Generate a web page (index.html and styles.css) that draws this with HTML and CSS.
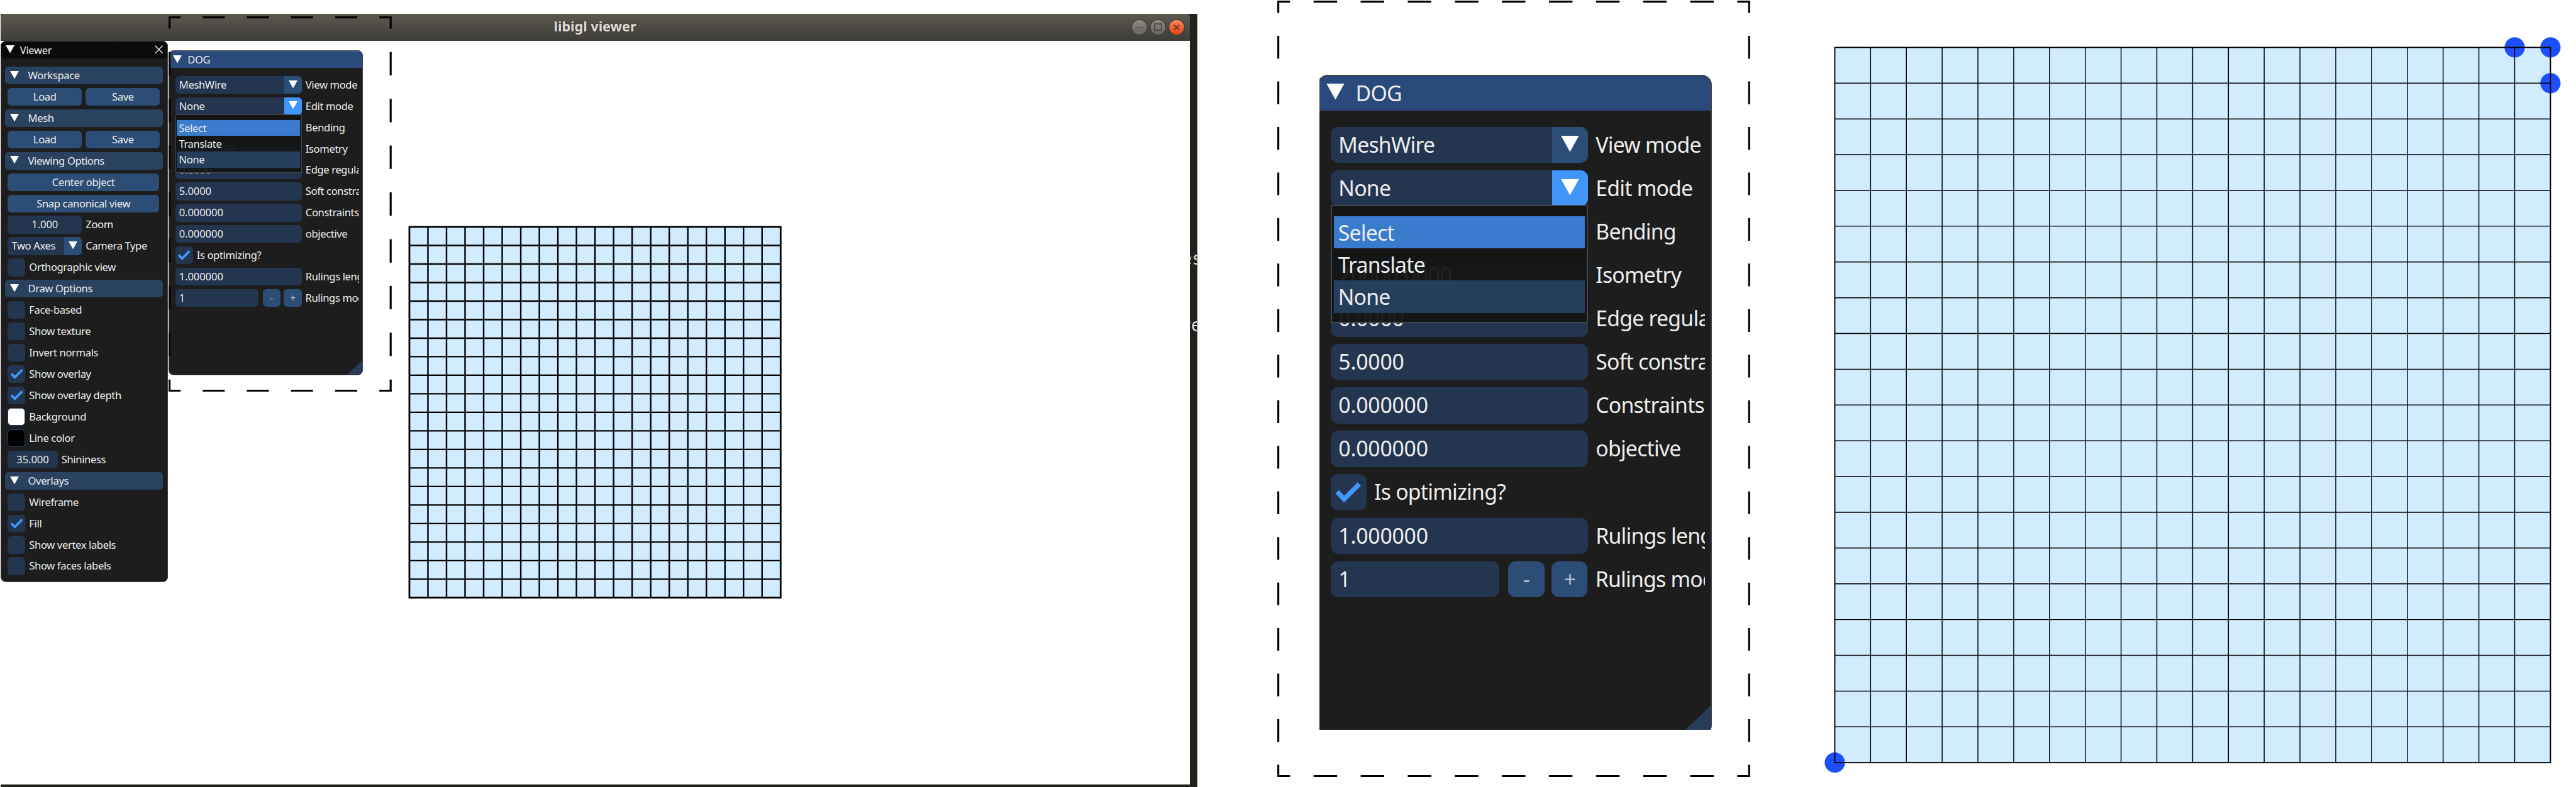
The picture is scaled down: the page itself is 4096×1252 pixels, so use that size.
FILE: index.html
```html
<!DOCTYPE html>
<html lang="en">
<head>
<meta charset="utf-8">
<title>libigl viewer</title>
<link rel="stylesheet" href="styles.css">
</head>
<body>
<svg class="defs" aria-hidden="true">
  <symbol id="down" viewBox="0 0 20 18"><path d="M0 0H20L10 18Z" fill="#fff"/></symbol>
  <symbol id="check" viewBox="0 0 27 22"><path d="M1.5 10.5L9 18.5L25.5 2" fill="none" stroke="#4296fa" stroke-width="5.2"/></symbol>
  <symbol id="mesh" viewBox="0 0 20 20" overflow="visible">
    <rect width="20" height="20" fill="#d1ebff"/>
  </symbol>
  <symbol id="wires" viewBox="0 0 20 20" overflow="visible">
    <path d="M0 1H20M0 2H20M0 3H20M0 4H20M0 5H20M0 6H20M0 7H20M0 8H20M0 9H20M0 10H20M0 11H20M0 12H20M0 13H20M0 14H20M0 15H20M0 16H20M0 17H20M0 18H20M0 19H20M1 0V20M2 0V20M3 0V20M4 0V20M5 0V20M6 0V20M7 0V20M8 0V20M9 0V20M10 0V20M11 0V20M12 0V20M13 0V20M14 0V20M15 0V20M16 0V20M17 0V20M18 0V20M19 0V20" fill="none"/>
  </symbol>
</svg>

<main class="figure">
  <section class="screen">
    <header class="titlebar">
      <span class="caption">libigl viewer</span>
      <svg class="controls" viewBox="0 0 124 40">
        <defs>
          <linearGradient id="gray" x2="0" y2="1"><stop stop-color="#8d8b84"/><stop offset="1" stop-color="#64635c"/></linearGradient>
          <linearGradient id="orange" x2="0" y2="1"><stop stop-color="#f58a68"/><stop offset=".5" stop-color="#ee6239"/><stop offset="1" stop-color="#df4a16"/></linearGradient>
        </defs>
        <g stroke="#3c3b37" stroke-width="2">
          <circle cx="20.3" cy="20" r="17.3" fill="url(#gray)"/>
          <circle cx="61.5" cy="20" r="17.3" fill="url(#gray)"/>
          <circle cx="102.5" cy="20" r="17.3" fill="url(#orange)"/>
        </g>
        <path d="M12 21.3H29M54 12.5H69V26.5H54Z" fill="none" stroke="#3c3b37" stroke-width="2"/>
        <path d="M96.5 14.5L108.5 26M108.5 14.5L96.5 26" fill="none" stroke="#4a2c12" stroke-width="2.2"/>
      </svg>
    </header>
    <div class="viewport">
      <svg class="mesh small" viewBox="-0.1 -0.1 20.2 20.2" preserveAspectRatio="none">
        <use href="#mesh" width="20" height="20"/>
        <use href="#wires" width="20" height="20" stroke="#000" stroke-width=".082"/>
        <rect width="20" height="20" fill="none" stroke="#000" stroke-width=".095"/>
      </svg>
    </div>
    <aside class="terminal"><span class="frag f1">es</span><span class="frag f2">re</span></aside>

    <section class="window viewer">
      <div class="bar dark"><svg class="tri"><use href="#down"/></svg><span>Viewer</span>
        <svg class="close" viewBox="0 0 19 19"><path d="M1 1L18 18M18 1L1 18" stroke="#fff" stroke-width="1.8"/></svg></div>
      <div class="rows">
        <div class="head"><svg class="tri"><use href="#down"/></svg>Workspace</div>
        <div class="row"><div class="btn half">Load</div><div class="btn half">Save</div></div>
        <div class="head"><svg class="tri"><use href="#down"/></svg>Mesh</div>
        <div class="row"><div class="btn half">Load</div><div class="btn half">Save</div></div>
        <div class="head"><svg class="tri"><use href="#down"/></svg>Viewing Options</div>
        <div class="row"><div class="btn full">Center object</div></div>
        <div class="row"><div class="btn full">Snap canonical view</div></div>
        <div class="row"><div class="field half num mid">1.000</div><span>Zoom</span></div>
        <div class="row"><div class="field half combo"><span>Two Axes</span><i class="arrow"><svg class="tri"><use href="#down"/></svg></i></div><span>Camera Type</span></div>
        <div class="row"><i class="box"></i><span>Orthographic view</span></div>
        <div class="head"><svg class="tri"><use href="#down"/></svg>Draw Options</div>
        <div class="row"><i class="box"></i><span>Face-based</span></div>
        <div class="row"><i class="box"></i><span>Show texture</span></div>
        <div class="row"><i class="box"></i><span>Invert normals</span></div>
        <div class="row"><i class="box"><svg class="tick"><use href="#check"/></svg></i><span>Show overlay</span></div>
        <div class="row"><i class="box"><svg class="tick"><use href="#check"/></svg></i><span>Show overlay depth</span></div>
        <div class="row"><i class="box white"></i><span>Background</span></div>
        <div class="row"><i class="box black"></i><span>Line color</span></div>
        <div class="row"><div class="field third num mid">35.000</div><span>Shininess</span></div>
        <div class="head"><svg class="tri"><use href="#down"/></svg>Overlays</div>
        <div class="row"><i class="box"></i><span>Wireframe</span></div>
        <div class="row"><i class="box"><svg class="tick"><use href="#check"/></svg></i><span>Fill</span></div>
        <div class="row"><i class="box"></i><span>Show vertex labels</span></div>
        <div class="row"><i class="box"></i><span>Show faces labels</span></div>
      </div>
    </section>

    <section class="window dog">
      <div class="bar blue"><svg class="tri"><use href="#down"/></svg><span>DOG</span></div>
      <div class="rows">
        <div class="row"><div class="field wide combo"><span>MeshWire</span><i class="arrow"><svg class="tri"><use href="#down"/></svg></i></div><span>View mode</span></div>
        <div class="row"><div class="field wide combo"><span>None</span><i class="arrow on"><svg class="tri"><use href="#down"/></svg></i></div><span>Edit mode</span></div>
        <div class="row"><div class="field wide num"></div><span>Bending</span></div>
        <div class="row"><div class="field wide num">20000.0000</div><span>Isometry</span></div>
        <div class="row"><div class="field wide num">0.0000</div><span>Edge regularization</span></div>
        <div class="row"><div class="field wide num">5.0000</div><span>Soft constraints</span></div>
        <div class="row"><div class="field wide num">0.000000</div><span>Constraints</span></div>
        <div class="row"><div class="field wide num">0.000000</div><span>objective</span></div>
        <div class="row"><i class="box"><svg class="tick"><use href="#check"/></svg></i><span>Is optimizing?</span></div>
        <div class="row"><div class="field wide num">1.000000</div><span>Rulings length</span></div>
        <div class="row"><div class="field step num">1</div><div class="btn sq">-</div><div class="btn sq">+</div><span>Rulings mod</span></div>
      </div>
      <div class="popup"><div class="opt sel">Select</div><div class="opt">Translate</div><div class="opt cur">None</div></div>
      <i class="grip"></i>
    </section>

    <svg class="dash near" viewBox="0 0 492 828.2">
      <path d="M0 2.2H492M0 826H492" stroke-width="4.4" stroke-dasharray="48.7" stroke-dashoffset="22.2"/>
      <path d="M2.2 0V828.2M489.8 0V828.2" stroke-width="4.4" stroke-dasharray="51.6" stroke-dashoffset="24.5"/>
    </svg>
  </section>

  <section class="closeup">
    <svg class="dash far" viewBox="0 0 1042.5 1713">
      <path d="M0 2.2H1042.5M0 1710.8H1042.5" stroke-width="4.4" stroke-dasharray="51.9" stroke-dashoffset="23.8"/>
      <path d="M2.2 0V1713M1040.3 0V1713" stroke-width="4.4" stroke-dasharray="50.25" stroke-dashoffset="22.9"/>
    </svg>
    <div class="crop">
      <section class="window dog">
        <div class="bar blue"><svg class="tri"><use href="#down"/></svg><span>DOG</span></div>
        <div class="rows">
          <div class="row"><div class="field wide combo"><span>MeshWire</span><i class="arrow"><svg class="tri"><use href="#down"/></svg></i></div><span>View mode</span></div>
          <div class="row"><div class="field wide combo"><span>None</span><i class="arrow on"><svg class="tri"><use href="#down"/></svg></i></div><span>Edit mode</span></div>
          <div class="row"><div class="field wide num"></div><span>Bending</span></div>
          <div class="row"><div class="field wide num">20000.0000</div><span>Isometry</span></div>
          <div class="row"><div class="field wide num">0.0000</div><span>Edge regularization</span></div>
          <div class="row"><div class="field wide num">5.0000</div><span>Soft constraints</span></div>
          <div class="row"><div class="field wide num">0.000000</div><span>Constraints</span></div>
          <div class="row"><div class="field wide num">0.000000</div><span>objective</span></div>
          <div class="row"><i class="box"><svg class="tick"><use href="#check"/></svg></i><span>Is optimizing?</span></div>
          <div class="row"><div class="field wide num">1.000000</div><span>Rulings length</span></div>
          <div class="row"><div class="field step num">1</div><div class="btn sq">-</div><div class="btn sq">+</div><span>Rulings mod</span></div>
        </div>
        <div class="popup"><div class="opt sel">Select</div><div class="opt">Translate</div><div class="opt cur">None</div></div>
        <i class="grip"></i>
      </section>
    </div>
  </section>

  <svg class="mesh big" viewBox="-0.5 -0.5 21 21" preserveAspectRatio="none">
    <use href="#mesh" width="20" height="20"/>
    <g fill="#1c50ff"><circle cx="19" cy="0" r=".283"/><circle cx="20" cy="0" r=".283"/><circle cx="20" cy="1" r=".283"/><circle cx="0" cy="20" r=".283"/></g>
    <use href="#wires" width="20" height="20" stroke="#000" stroke-width=".026"/>
    <rect width="20" height="20" fill="none" stroke="#000" stroke-width=".034"/>
  </svg>
</main>
</body>
</html>
```
FILE: styles.css
```css
:root { --u: .72113px; }
* { box-sizing: border-box; }
body { margin: 0; background: #fff; overflow: hidden; font-family: "Noto Sans", "Open Sans", sans-serif; }
i { font-style: normal; display: block; }
svg { display: block; flex: none; }
.defs { position: absolute; width: 0; height: 0; }

.figure { display: flex; align-items: flex-start; width: 4096px; height: 1252px; overflow: hidden; }

/* desktop screenshot: title bar, viewport, terminal strip behind */
.screen {
  position: relative; flex: none; display: grid;
  grid-template: calc(var(--u)*58.6) 1fr / 1fr calc(var(--u)*17);
  width: calc(var(--u)*2639); height: calc(var(--u)*1705);
  margin: calc(var(--u)*31.2) 0 0 calc(var(--u)*1);
  background: #22221d;
}
.titlebar {
  display: flex; align-items: center; justify-content: center; position: relative;
  background: linear-gradient(#5c594f, #3d3c38);
  border-radius: calc(var(--u)*7) calc(var(--u)*7) 0 0;
}
.caption {
  color: #dfdbd2; font-weight: 700; font-size: calc(var(--u)*30); line-height: 1;
  text-shadow: 0 0 calc(var(--u)*3) #2b2a33; margin-bottom: calc(var(--u)*4);
}
.controls { position: absolute; right: calc(var(--u)*7); width: calc(var(--u)*124); height: calc(var(--u)*40); }
.viewport { grid-row: 2; background: #fff; margin-bottom: calc(var(--u)*6); padding: calc(var(--u)*406.9) 0 0 calc(var(--u)*897.9); }
.mesh.small { width: calc(var(--u)*826.8); height: calc(var(--u)*826.2); }
.terminal { grid-column: 2; grid-row: 1 / 3; position: relative; overflow: hidden; border-right: calc(var(--u)*1) solid #55564f; }
.frag { position: absolute; right: calc(var(--u)*-13); font: calc(var(--u)*39)/1 "DejaVu Sans Mono", monospace; color: #dcdcd6; }
.f1 { top: calc(var(--u)*520.5); }
.f2 { top: calc(var(--u)*667.5); right: calc(var(--u)*-11); }

/* tool windows */
.window {
  position: absolute; background: #1d1d1d; color: #ededed; overflow: hidden;
  border: calc(var(--u)*2) solid #44434e; border-radius: calc(var(--u)*11);
  font-size: calc(var(--u)*23); letter-spacing: -.022em; white-space: nowrap;
}
.viewer { left: calc(var(--u)*.7); top: calc(var(--u)*58.5); width: calc(var(--u)*368.5); height: calc(var(--u)*1194.3); }
.dog { left: calc(var(--u)*371); top: calc(var(--u)*79.9); width: calc(var(--u)*427.7); height: calc(var(--u)*716.6); }
.bar { display: flex; align-items: center; height: calc(var(--u)*37.4); padding: 0 calc(var(--u)*9); }
.bar span { margin-left: calc(var(--u)*12.5); }
.dark { background: #0a0a0a; }
.blue { background: #294a7a; border-top: calc(var(--u)*.8) solid #44598a; margin-top: calc(var(--u)*-.8); }
.dog .bar { padding-left: calc(var(--u)*8); height: calc(var(--u)*38.4); }
.tri { width: calc(var(--u)*19.6); height: calc(var(--u)*17.4); position: relative; top: calc(var(--u)*-1.4); }
.close { margin-left: auto; margin-top: calc(var(--u)*-1); width: calc(var(--u)*18.5); height: calc(var(--u)*18.5); }
.rows { display: flex; flex-direction: column; gap: calc(var(--u)*7.99); }
.viewer .rows { padding: calc(var(--u)*18.4) calc(var(--u)*9.6) 0 calc(var(--u)*7.6); }
.dog .rows { padding-top: calc(var(--u)*17.3); margin: 0 calc(var(--u)*6) 0 calc(var(--u)*12.9); overflow: hidden; }
.row, .head { display: flex; align-items: center; height: calc(var(--u)*39.1); flex: none; line-height: calc(var(--u)*39.1); }
.row { gap: calc(var(--u)*8.4); }
.viewer .row { padding-left: calc(var(--u)*6.3); }
.head { background: #294260; border-radius: calc(var(--u)*8); padding-left: calc(var(--u)*12); gap: calc(var(--u)*19.5); }
.btn, .field, .box { height: 100%; border-radius: calc(var(--u)*8); flex: none; }
.btn { background: #2c4d75; text-align: center; }
.field { background: #243550; padding-left: calc(var(--u)*8.6); }
.num { letter-spacing: -.006em; }
.mid { padding: 0; text-align: center; }
.half { width: calc(var(--u)*163.7); }
.full { width: calc(var(--u)*334.1); }
.third { width: calc(var(--u)*110.2); }
.wide { width: calc(var(--u)*279); }
.step { width: calc(var(--u)*183.2); }
.sq { width: calc(var(--u)*38.9); color: #b4bfcc; }
.step + .sq { margin-left: calc(var(--u)*1.2); }
.sq + .sq { margin-left: calc(var(--u)*-.3); }
.combo { display: flex; justify-content: space-between; overflow: hidden; }
.arrow { width: calc(var(--u)*39); background: #2c4d75; display: flex; align-items: center; justify-content: center; }
.arrow.on { background: #4296fa; }
.box { width: calc(var(--u)*38.9); background: #243550; display: flex; align-items: center; justify-content: center; }
.box.white, .box.black { border: calc(var(--u)*1.6) solid #243f63; }
.white { background: #fff; }
.black { background: #000; }
.tick { width: calc(var(--u)*27); height: calc(var(--u)*22); }

.popup {
  position: absolute; left: calc(var(--u)*12.9); top: calc(var(--u)*140);
  width: calc(var(--u)*279); height: calc(var(--u)*128.3);
  padding: calc(var(--u)*11) calc(var(--u)*2.2) 0;
  background: rgba(20,20,20,.94); border: calc(var(--u)*1.7) solid #46454e;
}
.opt { height: calc(var(--u)*35.2); line-height: calc(var(--u)*36); padding-left: calc(var(--u)*4.6); }
.sel { background: #397bcd; height: calc(var(--u)*34.6); }
.cur { background: #243e5c; height: calc(var(--u)*35); }
.grip {
  position: absolute; right: 0; bottom: 0; width: calc(var(--u)*32); height: calc(var(--u)*31);
  background: #263c57; clip-path: polygon(100% 0, 100% 100%, 0 100%);
}

.dash { position: absolute; fill: none; stroke: #000; }
.near { left: calc(var(--u)*370.5); top: calc(var(--u)*4.2); width: calc(var(--u)*492); height: calc(var(--u)*828.2); }

/* enlarged crop of the tool window */
.closeup { position: relative; flex: none; width: calc(var(--u)*1042.5); height: calc(var(--u)*1713); margin: calc(var(--u)*1) 0 0 calc(var(--u)*176.8); }
.far { inset: 0; width: 100%; height: 100%; }
.crop { position: relative; overflow: hidden; width: calc(var(--u)*867.2); height: calc(var(--u)*1445.5); margin: calc(var(--u)*163.4) 0 0 calc(var(--u)*92); }
.crop .window { --u: 1.4668px; left: -2.8px; top: 0; }
.crop .rows { padding-top: calc(var(--u)*17.9); }

.mesh.big { width: calc(var(--u)*1656.9); height: calc(var(--u)*1656.6); margin: calc(var(--u)*65.7) 0 0 calc(var(--u)*147.3); }
```
